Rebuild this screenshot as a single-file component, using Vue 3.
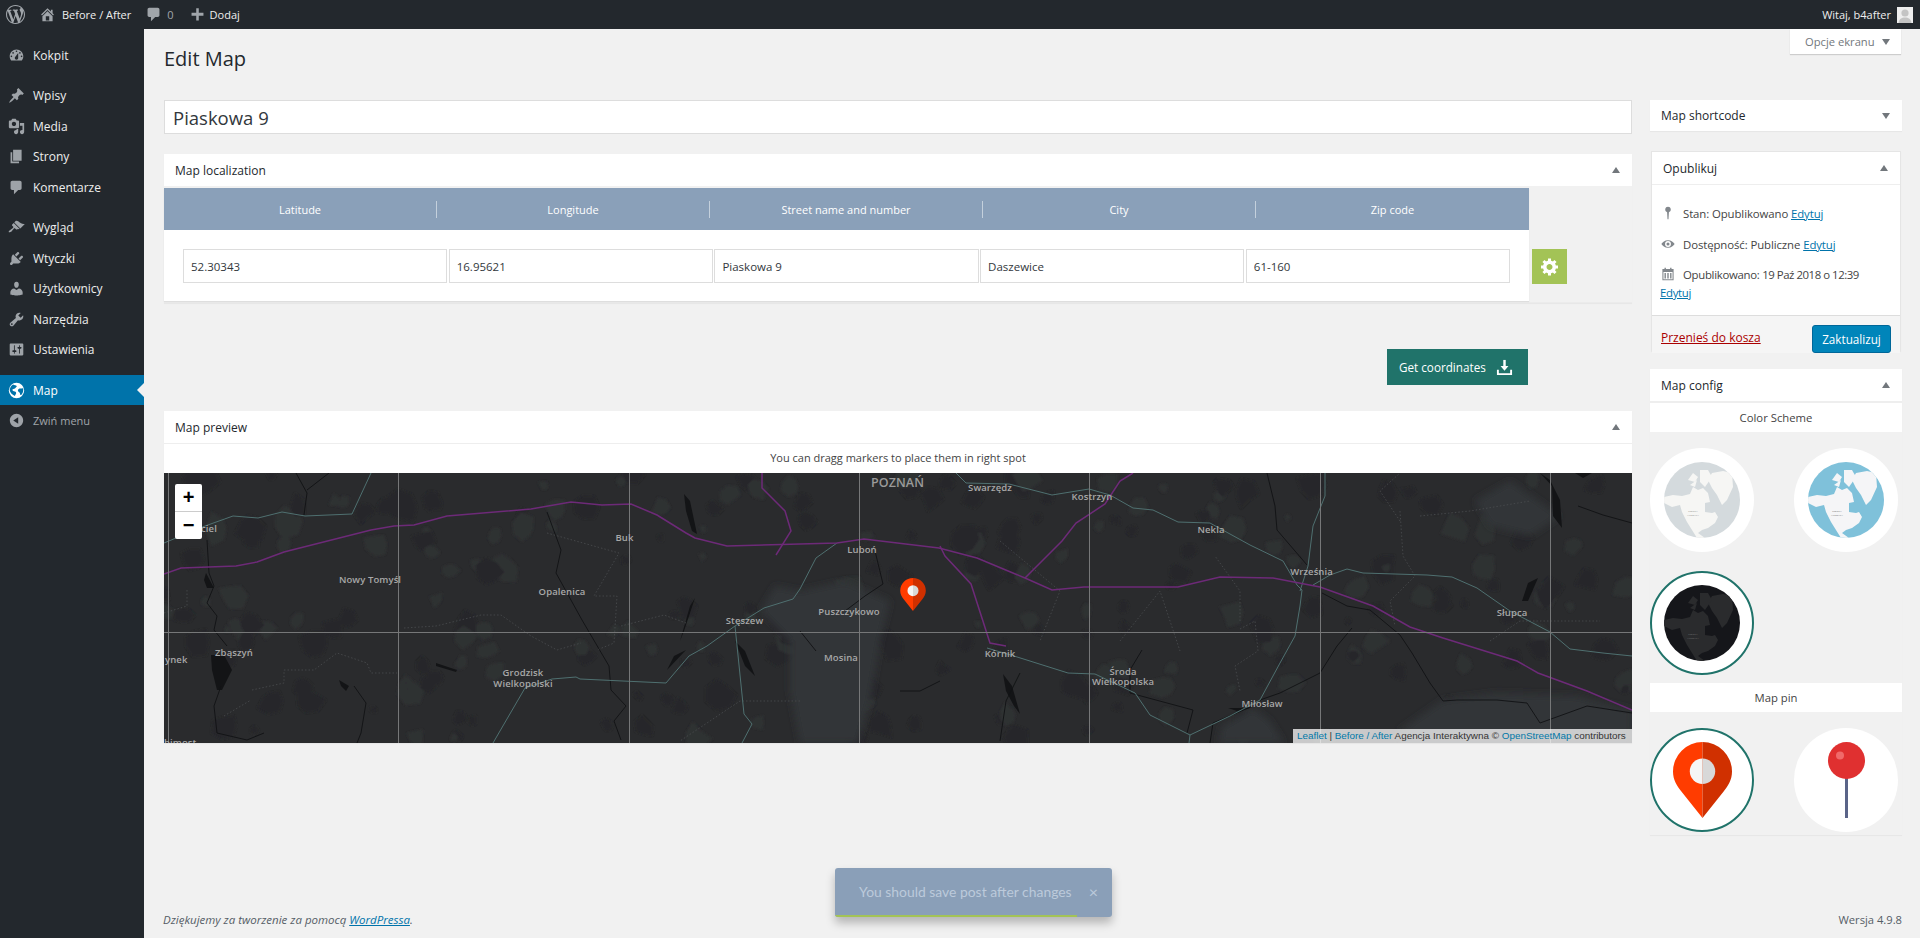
<template>
  <div class="page">
    <header class="admin-bar">
      <svg class="bar-logo" viewBox="0 0 20 20"><path :d="icons.wp" /></svg>
      <svg class="bar-icon home" viewBox="0 0 20 20"><path :d="icons.home" /></svg>
      <span class="bar-link">Before / After</span>
      <svg class="bar-icon bubble" viewBox="0 0 20 20"><path :d="icons.comments" /></svg>
      <span class="bar-count">0</span>
      <svg class="bar-icon plus" viewBox="0 0 20 20"><path :d="icons.plus" /></svg>
      <span class="bar-link">Dodaj</span>
      <span class="bar-user">Witaj, b4after</span>
      <span class="avatar">
        <svg viewBox="0 0 16 16"><circle cx="8" cy="6" r="3.6" /><path d="M1.5 16c.5-4 3-5.5 6.5-5.5s6 1.500 6.500 5.500z" /></svg>
      </span>
    </header>

    <div class="layout">
      <nav class="sidebar">
        <a
          v-for="item in menu"
          :key="item.label"
          class="menu-item"
          :class="{ active: item.active, gap: item.gap, collapse: item.collapse }"
        >
          <svg v-if="item.icon" class="menu-icon" viewBox="0 0 20 20"><path :d="item.icon" /></svg>
          <svg v-else class="menu-icon" viewBox="0 0 20 20">
            <circle cx="10" cy="10" r="9" fill="#fff" />
            <path fill="#0073aa" d="M6 2.800c1.500 1 3.500.6 4.200 1.800.6 1-1 1.400-1.500 2.400-.5 1.100-2.300.6-3.200 1.500-.8.8.2 2.200 1.500 2.300 1.500.1 2.600.8 2.600 2.200 0 1.300-1.200 2-1.500 3.600C4.700 14.800 2.300 12.400 2 9.800 2 7 3.600 4.200 6 2.800zM13 7.800c1.200-.5 2.500.2 3.600-.4.600-.3 1.200.4 1.300 1.400.2 2-.5 4.500-2.100 6.100-1 .9-1.700-.3-1.700-1.500 0-1.400-1.800-1.500-2.300-2.800-.4-1.100.1-2.400 1.200-2.800z" />
          </svg>
          <span>{{ item.label }}</span>
        </a>
      </nav>

      <div class="content">
        <div class="screen-options">Opcje ekranu <i class="tri-down small"></i></div>

        <div class="columns">
          <main class="main-col">
            <h1>Edit Map</h1>
            <input class="title-input" value="Piaskowa 9" />

            <section class="box loc-box">
              <div class="box-head">Map localization <i class="tri-up"></i></div>
              <div class="loc-wrap">
                <div class="loc-table">
                  <div class="loc-head">
                    <div v-for="col in columns" :key="col" class="loc-col">{{ col }}</div>
                  </div>
                  <div class="loc-row">
                    <input v-for="val in values" :key="val" class="loc-input" :value="val" />
                  </div>
                </div>
                <button class="gear-btn">
                  <svg viewBox="0 0 20 20"><path :d="icons.gear" /></svg>
                </button>
              </div>
            </section>

            <div class="coords-row">
              <button class="coords-btn">
                Get coordinates
                <svg viewBox="0 0 18 18" fill="none" stroke="#fff" stroke-width="2">
                  <path d="M9 1v8.500" stroke-width="2.600" />
                  <path d="M4.800 7.500h8.400L9 12.500z" fill="#fff" stroke="none" />
                  <path d="M2 11.500v4.500h14v-4.500" />
                </svg>
              </button>
            </div>

            <section class="box preview-box">
              <div class="box-head bordered">Map preview <i class="tri-up"></i></div>
              <div class="preview-note">You can dragg markers to place them in right spot</div>
              <div class="map">
                <svg class="map-svg" viewBox="164 472 1468 270">
                  <defs>
                    <filter id="soft" x="0" y="0" width="100%" height="100%">
                      <feGaussianBlur stdDeviation="1.300" />
                    </filter>
                    <filter id="softer" x="-10%" y="-10%" width="120%" height="120%">
                      <feGaussianBlur stdDeviation="3.500" />
                    </filter>
                  </defs>
                  <rect x="164" y="472" width="1468" height="270" fill="#2a2b2d" />
                  <g filter="url(#soft)">
                    <polygon
                      v-for="(blob, i) in blobs"
                      :key="i"
                      :points="blob.points"
                      :fill="blob.fill"
                    />
                  </g>
                  <g filter="url(#softer)" fill="#313437">
                    <polygon points="760,610 775,585 800,590 845,580 890,600 880,640 870,700 858,742 800,742 790,690 790,640" />
                    <polygon points="1400,742 1400,729 1443,699 1497,692 1577,695 1632,709 1632,742" />
                    <polygon points="1218,742 1222,725 1253,707 1270,720 1284,742" />
                    <polygon points="1475,500 1510,480 1560,515 1530,535 1490,525" />
                  </g>
                  <path v-for="lake in lakes" :key="lake" :d="lake" fill="#131416" />
                  <path
                    v-for="(line, i) in borders"
                    :key="'b' + i"
                    :d="line"
                    fill="none"
                    stroke="#4a4c4f"
                    stroke-width="0.8"
                    stroke-dasharray="1.500 2"
                  />
                  <path
                    v-for="(line, i) in rivers"
                    :key="'r' + i"
                    :d="line"
                    fill="none"
                    stroke="#111214"
                    stroke-width="0.900"
                  />
                  <path
                    v-for="(line, i) in tealRoads"
                    :key="'t' + i"
                    :d="line"
                    fill="none"
                    stroke="#4f7070"
                    stroke-width="1"
                  />
                  <path
                    v-for="(line, i) in purpleRoads"
                    :key="'p' + i"
                    :d="line"
                    fill="none"
                    stroke="#6d2a78"
                    stroke-width="1.500"
                  />
                  <path
                    v-for="x in gridX"
                    :key="x"
                    :d="`M${x} 472V742`"
                    stroke="#767778"
                    stroke-width="1"
                  />
                  <path d="M164 631.500H1632" stroke="#767778" stroke-width="1" />
                  <text
                    v-for="label in labels"
                    :key="label.text + label.y"
                    class="map-label"
                    :class="{ big: label.big }"
                    :x="label.x"
                    :y="label.y"
                    :text-anchor="label.start ? 'start' : 'middle'"
                  >{{ label.text }}</text>
                </svg>

                <svg class="marker" viewBox="0 0 59 76">
                  <path :d="pinLeft" fill="#ff3c00" />
                  <path :d="pinRight" fill="#d03000" />
                  <path d="M29.500 16.500a12.700 12.700 0 0 0 0 25.400z" fill="#f5f5f5" />
                  <path d="M29.500 16.500a12.700 12.700 0 0 1 0 25.400z" fill="#d8d8d8" />
                </svg>

                <div class="zoom-ctl">
                  <span>+</span>
                  <span>−</span>
                </div>

                <div class="attribution">
                  <a>Leaflet</a> | <a>Before / After</a> Agencja Interaktywna © <a>OpenStreetMap</a> contributors
                </div>
              </div>
            </section>
          </main>

          <aside class="side-col">
            <section class="box">
              <div class="box-head short">Map shortcode <i class="tri-down"></i></div>
            </section>

            <section class="box publish">
              <div class="box-head bordered">Opublikuj <i class="tri-up"></i></div>
              <div class="pub-body">
                <p>
                  <svg class="pub-icon" viewBox="0 0 20 20"><path d="M10 1a4 4 0 0 1 1.300 7.800L10.700 19H9.300L8.700 8.800A4 4 0 0 1 10 1z" /></svg>Stan: <b>Opublikowano</b> <a>Edytuj</a>
                </p>
                <p>
                  <svg class="pub-icon" viewBox="0 0 20 20"><path fill-rule="evenodd" d="M10 4.500c4.500 0 8 3 9.500 5.500-1.500 2.500-5 5.500-9.500 5.500S2 12.500.5 10C2 7.500 5.500 4.500 10 4.500zm0 1.300a4.200 4.200 0 1 0 0 8.400 4.200 4.200 0 0 0 0-8.400zM10 7.800a2.200 2.200 0 1 1 0 4.400 2.200 2.200 0 0 1 0-4.400z" /></svg>Dostępność: <b>Publiczne</b> <a>Edytuj</a>
                </p>
                <p class="tight">
                  <svg class="pub-icon" viewBox="0 0 20 20"><path fill-rule="evenodd" d="M5 1h2v2h6V1h2v2h3v16H2V3h3zM3.500 7v10.500h13V7zM5 8.500h2v8H5zm4 0h2v8H9zm4 0h2v8h-2z" /></svg>Opublikowano: <b>19 Paź 2018 o 12:39</b> <a>Edytuj</a>
                </p>
              </div>
              <div class="pub-foot">
                <a class="trash">Przenieś do kosza</a>
                <button class="update-btn">Zaktualizuj</button>
              </div>
            </section>

            <section class="box config">
              <div class="box-head">Map config <i class="tri-up"></i></div>
              <div class="config-title">Color Scheme</div>
              <div class="choice-grid schemes">
                <div
                  v-for="scheme in schemes"
                  :key="scheme.name"
                  class="choice"
                  :class="{ selected: scheme.selected }"
                >
                  <svg class="globe" viewBox="0 0 76 76">
                    <clipPath :id="'clip-' + scheme.name"><circle cx="38" cy="38" r="38" /></clipPath>
                    <circle cx="38" cy="38" r="38" :fill="scheme.sea" />
                    <g :fill="scheme.land" :clip-path="`url(#clip-${scheme.name})`">
                      <polygon points="44,18 48,11 59,9 68,11 69,25 63,38 58,43 53,33 48,26" />
                      <polygon points="0,35 9,33 18,34 26,32 29,25 34,28 39,26 44,31 46,40 41,41 41,50 48,51 51,50 54,55 51,61 44,66 38,68 34,71 41,76 33,76 28,68 23,60 18,50 16,43 8,45 0,41" />
                      <polygon points="26,23 33,18 31,25" />
                      <polygon points="24,18 29,11 34,15 31,20" />
                      <polygon points="36,8 44,8 48,15 41,25 36,20" />
                    </g>
                    <text class="globe-text" :fill="scheme.text" x="29" y="49.500" text-anchor="middle">NORTH</text>
                    <text class="globe-text" :fill="scheme.text" x="29" y="53.500" text-anchor="middle">AMERICA</text>
                  </svg>
                </div>
              </div>
              <div class="config-title">Map pin</div>
              <div class="choice-grid pins">
                <div class="choice selected">
                  <svg class="big-pin" viewBox="0 0 59 76">
                    <path :d="pinLeft" fill="#ff3c00" />
                    <path :d="pinRight" fill="#d03000" />
                    <path d="M29.500 16.500a12.700 12.700 0 0 0 0 25.400z" fill="#f5f5f5" />
                    <path d="M29.500 16.500a12.700 12.700 0 0 1 0 25.400z" fill="#d8d8d8" />
                  </svg>
                </div>
                <div class="choice">
                  <svg class="big-pin" viewBox="0 0 59 76">
                    <rect x="28" y="35" width="3" height="41" fill="#5a6488" />
                    <circle cx="29.500" cy="18.500" r="18.500" fill="#e03030" />
                    <circle cx="23" cy="13.500" r="4" fill="#f06a6a" />
                  </svg>
                </div>
              </div>
            </section>
          </aside>
        </div>

        <footer class="foot">
          <span class="thanks">Dziękujemy za tworzenie za pomocą <a>WordPressa</a>.</span>
          <span class="version">Wersja 4.9.8</span>
        </footer>
      </div>
    </div>

    <div class="toast">
      <span class="toast-text">You should save post after changes</span>
      <span class="toast-close">×</span>
      <div class="toast-bar"></div>
    </div>
  </div>
</template>

<script setup>
const icons = {
  wp: 'M20 10c0-5.510-4.490-10-10-10C4.480 0 0 4.490 0 10c0 5.520 4.480 10 10 10 5.510 0 10-4.480 10-10zM7.780 15.370L4.370 6.220c.55-.02 1.170-.08 1.170-.08.5-.06.44-1.130-.06-1.110 0 0-1.450.11-2.370.11-.18 0-.37 0-.58-.01C4.120 2.690 6.870 1.110 10 1.110c2.330 0 4.450.87 6.050 2.340-.68-.11-1.650.39-1.650 1.580 0 .74.45 1.360.9 2.100.35.61.55 1.360.55 2.460 0 1.490-1.400 5-1.400 5l-3.030-8.370c.54-.02.82-.17.82-.17.5-.05.44-1.250-.06-1.220 0 0-1.440.12-2.380.12-.87 0-2.330-.12-2.330-.12-.5-.03-.56 1.200-.06 1.220l.92.08 1.260 3.410zM17.410 10c.24-.64.74-1.870.43-4.250.7 1.290 1.050 2.710 1.050 4.250 0 3.290-1.730 6.240-4.400 7.780.97-2.590 1.940-5.200 2.920-7.780zM6.100 18.090C3.120 16.650 1.110 13.530 1.110 10c0-1.300.23-2.480.72-3.590C3.250 10.300 4.670 14.200 6.100 18.090zm4.030-6.630l2.580 6.980c-.86.29-1.760.45-2.710.45-.79 0-1.570-.11-2.290-.33.81-2.380 1.620-4.740 2.420-7.100z',
  home: 'M16 8.500l1.530 1.530-1.060 1.060L10 4.620l-6.470 6.470-1.060-1.060L10 2.500l4 4v-2h2v4zm-6-2.460l6 5.990V18H4v-5.970zM12 17v-5H8v5h4z',
  comments: 'M5 2h10c1.100 0 2 .9 2 2v7c0 1.100-.9 2-2 2h-3l-5 5v-5H5c-1.100 0-2-.9-2-2V4c0-1.100.9-2 2-2z',
  plus: 'M17 8v3.500h-5.500V17h-3v-5.500H3V8h5.500V2.500h3V8z',
  gear: 'M18 11.500h-2.180c-.17.7-.44 1.350-.81 1.930l1.540 1.540-2.100 2.100-1.540-1.540c-.58.36-1.230.63-1.910.79v2.180H8v-2.180c-.68-.16-1.330-.43-1.910-.79l-1.540 1.540-2.120-2.120 1.540-1.540c-.36-.58-.63-1.230-.79-1.910H1V8.530h2.170c.16-.7.44-1.350.8-1.940L2.430 5.050l2.100-2.100 1.540 1.540c.58-.37 1.240-.64 1.930-.81V1.500h3v2.180c.68.16 1.330.43 1.910.79l1.540-1.540 2.120 2.120-1.540 1.540c.36.59.64 1.240.8 1.940H18v2.970zm-8.500 1.500c1.660 0 3-1.340 3-3s-1.340-3-3-3-3 1.340-3 3 1.340 3 3 3z',
}

const menu = [
  { label: 'Kokpit', icon: 'M3.760 16h12.480c1.100-1.370 1.760-3.110 1.760-5 0-4.420-3.580-8-8-8s-8 3.580-8 8c0 1.890.66 3.630 1.760 5zM10 4c.55 0 1 .45 1 1s-.45 1-1 1-1-.45-1-1 .45-1 1-1zM6 6c.55 0 1 .45 1 1s-.45 1-1 1-1-.45-1-1 .45-1 1-1zm8 0c.55 0 1 .45 1 1s-.45 1-1 1-1-.45-1-1 .45-1 1-1zm-5.370 5.550L12 7v6c0 1.100-.9 2-2 2s-2-.9-2-2c0-.57.24-1.080.63-1.450zM4 10c.55 0 1 .45 1 1s-.45 1-1 1-1-.45-1-1 .45-1 1-1zm12 0c.55 0 1 .45 1 1s-.45 1-1 1-1-.45-1-1 .45-1 1-1z' },
  { label: 'Wpisy', gap: true, icon: 'M10.440 3.020l1.820-1.820 6.360 6.350-1.830 1.820c-1.050-.68-2.480-.57-3.410.36l-.75.75c-.92.93-1.040 2.350-.35 3.410l-1.830 1.820-2.410-2.410-2.800 2.790c-.42.42-3.380 2.710-3.800 2.290s1.860-3.390 2.280-3.810l2.790-2.790L4.100 9.360l1.830-1.820c1.050.69 2.480.57 3.400-.36l.75-.75c.93-.92 1.050-2.350.36-3.410z' },
  { label: 'Media', icon: 'M13 11V4c0-.55-.45-1-1-1h-1.670L9 1H5L3.670 3H2c-.55 0-1 .45-1 1v7c0 .55.45 1 1 1h10c.55 0 1-.45 1-1zM7 4.500c1.380 0 2.500 1.120 2.500 2.500S8.380 9.500 7 9.500 4.500 8.380 4.500 7 5.620 4.500 7 4.500zM14 6h5v10.500c0 1.380-1.120 2.500-2.500 2.500S14 17.880 14 16.500s1.120-2.500 2.500-2.500c.17 0 .34.02.5.05V9h-3V6zm-4 8.050V13h2v3.500c0 1.380-1.120 2.500-2.500 2.500S7 17.880 7 16.500 8.120 14 9.500 14c.17 0 .34.02.5.05z' },
  { label: 'Strony', icon: 'M6 15V2h10v13H6zm-1 1h8v2H3V5h2v11z' },
  { label: 'Komentarze', icon: 'M5 2h9c1.100 0 2 .9 2 2v7c0 1.100-.9 2-2 2h-2l-5 5v-5H5c-1.100 0-2-.9-2-2V4c0-1.100.9-2 2-2z' },
  { label: 'Wygląd', gap: true, icon: 'M14.480 11.060L7.410 3.990l1.500-1.500c.5-.56 2.300-.47 3.510.32 1.210.8 1.430 1.280 2.910 2.100 1.180.64 2.450 1.260 4.450.85zm-.71.71L6.700 4.700 4.930 6.470c-.39.39-.39 1.020 0 1.410l1.060 1.060c.39.39.39 1.030 0 1.420-.6.6-1.430 1.110-2.210 1.690-.35.26-.7.53-1.010.84C1.430 13.230.4 14.850 1.020 15.500c.54.56 2.290-.21 3.380-1.220.31-.31.58-.66.84-1.010.58-.78 1.090-1.610 1.690-2.210.39-.39 1.020-.39 1.410 0l1.060 1.060c.39.39 1.020.39 1.410 0z' },
  { label: 'Wtyczki', icon: 'M13.110 4.360L9.870 7.600 8 5.730l3.240-3.240c.35-.34 1.050-.2 1.560.32.52.51.66 1.210.31 1.550zm-8 1.770l.91-1.120 9.010 9.010-1.190.84c-.71.71-2.630 1.160-3.820 1.160H6.140L4.900 17.260c-.59.59-1.540.59-2.120 0-.59-.58-.59-1.530 0-2.120l1.240-1.240v-3.880c0-1.130.4-3.190 1.090-3.890zm7.260 3.970l3.240-3.240c.34-.35 1.040-.21 1.550.31.52.51.66 1.210.31 1.550l-3.240 3.250z' },
  { label: 'Użytkownicy', icon: 'M10 9.250c-2.270 0-2.730-3.440-2.730-3.440C7 4.020 7.820 2 9.970 2c2.160 0 2.980 2.020 2.710 3.810 0 0-.41 3.440-2.680 3.440zm0 2.570L12.720 10c2.390 0 4.520 2.330 4.520 4.530v2.490s-3.650 1.130-7.240 1.130c-3.650 0-7.240-1.130-7.240-1.130v-2.490c0-2.250 1.940-4.480 4.470-4.480z' },
  { label: 'Narzędzia', icon: 'M16.680 9.770c-1.340 1.340-3.300 1.670-4.950.99l-5.410 6.520c-.99.99-2.590.99-3.580 0s-.99-2.590 0-3.570l6.520-5.420c-.68-1.650-.35-3.610.99-4.950 1.280-1.280 3.120-1.620 4.720-1.060l-2.890 2.890 2.820 2.820 2.860-2.870c.53 1.580.18 3.390-1.080 4.650zM3.810 16.210c.4.39 1.040.39 1.430 0 .4-.4.4-1.040 0-1.430-.39-.4-1.030-.4-1.430 0-.39.39-.39 1.030 0 1.430z' },
  { label: 'Ustawienia', icon: 'M18 16V4c0-.55-.45-1-1-1H3c-.55 0-1 .45-1 1v12c0 .55.45 1 1 1h14c.55 0 1-.45 1-1zM8 11h1c.55 0 1 .45 1 1s-.45 1-1 1H8v1.500c0 .28-.22.5-.5.5s-.5-.22-.5-.5V13H6c-.55 0-1-.45-1-1s.45-1 1-1h1V5.500c0-.28.22-.5.5-.5s.5.22.5.5V11zm5-2h-1c-.55 0-1-.45-1-1s.45-1 1-1h1V5.500c0-.28.22-.5.5-.5s.5.22.5.5V7h1c.55 0 1 .45 1 1s-.45 1-1 1h-1v5.500c0 .28-.22.5-.5.5s-.5-.22-.5-.5V9z' },
  { label: 'Map', gap: true, active: true },
  { label: 'Zwiń menu', collapse: true, icon: 'M10 2.160c4.330 0 7.840 3.510 7.840 7.840s-3.510 7.840-7.840 7.840S2.160 14.330 2.160 10 5.710 2.160 10 2.160zm2 11.720V6.120L6.180 9.970z' },
]

const columns = ['Latitude', 'Longitude', 'Street name and number', 'City', 'Zip code']
const values = ['52.30343', '16.95621', 'Piaskowa 9', 'Daszewice', '61-160']

const schemes = [
  { name: 'grey', sea: '#d4dadd', land: '#f6f6f4', text: '#888' },
  { name: 'blue', sea: '#7fc1da', land: '#f5f5f7', text: '#666' },
  { name: 'dark', sea: '#15161a', land: '#2a2b2d', text: '#777', selected: true },
]

const pinLeft = 'M29.500 0A29.500 29.500 0 0 0 0 29.500C0 38 4 44 8 49L29.500 76Z'
const pinRight = 'M29.500 0A29.500 29.500 0 0 1 59 29.500C59 38 55 44 51 49L29.500 76Z'

const gridX = [168.500, 398.500, 629.500, 859.500, 1089.500, 1320.500, 1550.500]

const purpleRoads = [
  'M164 573L181 567L236 565L257 561L284 551L371 529L394 525L414 524L447 515L531 508L571 501L602 504L631 503L657 514L686 532L695 537L727 545L800 543L837 542L864 538L939 547L977 557L1025 577L1052 589L1084 586L1178 586L1220 576L1273 577L1320 586L1373 605L1410 626L1443 637L1517 660L1538 672L1587 690L1632 709',
  'M1133 472L1120 480L1105 503L1076 522L1062 540L1025 577',
  'M940 545L945 555L971 583L990 642L1006 645',
  'M762 472L762 487L785 510L791 530L776 554',
]

const tealRoads = [
  'M371 472L352 513L305 515L282 511L258 517L233 515L205 525L164 542',
  'M493 742L525 687L552 678L576 676L580 678L666 682L689 655L707 645L735 625L764 607L793 598L800 588L816 557L837 542',
  'M735 625L744 713L752 723L742 742',
  'M956 472L966 482L1009 483L1052 494L1089 488L1110 494L1133 507L1153 509L1178 521L1210 522L1250 544L1283 560L1297 584L1302 589L1300 605L1295 635L1280 662L1260 699L1230 715L1190 734L1150 714L1135 692L1095 673L1068 672L1014 655L987 647',
  'M1325 472L1325 495L1313 525L1308 565L1300 590',
  'M1313 584L1330 574L1347 568L1363 572L1427 574L1452 576L1477 587L1510 610L1550 631L1570 648L1603 652L1632 655',
  'M1190 734L1189 742',
]

const rivers = [
  'M207 539L209 572L214 585L207 602L217 615L214 629L227 645',
  'M221 685L214 705L217 732L247 739L264 732',
  'M547 511L561 549L556 572L582 619L609 665L611 689L626 705L614 720L621 739',
  'M296 472L307 492L304 514',
  'M329 472L307 489',
  'M354 685L366 702L361 732L357 742',
  'M1267 472L1275 505L1277 529L1307 564',
  'M1322 592L1347 605L1370 609L1400 634L1412 652L1430 682L1443 700L1457 699L1497 699L1527 702L1540 722L1587 705L1632 712',
  'M1352 627L1337 645L1320 672L1280 692L1260 699',
  'M1253 705L1213 722L1210 742',
  'M1578 505L1603 514L1632 522',
  'M1142 649L1130 669L1130 692L1193 709L1187 732',
  'M875 550L883 583L865 595L845 610',
  'M800 630L816 650',
  'M940 680L920 690L900 690',
  'M1000 740L1006 700L1020 672',
]

const borders = [
  'M404 627L436 625L481 614L501 614L531 635L557 649L581 642',
  'M547 532L619 552L594 595L617 595L614 642L597 649',
  'M621 625L664 614L686 622',
  'M284 669L314 669L337 652L367 662L371 672L397 672',
  'M252 689L284 682L284 669',
  'M224 715L251 699',
  'M164 612L187 605L187 587',
  'M800 700L740 700L680 740',
  'M1000 540L1060 590L1040 640',
  'M1120 640L1160 590L1180 650',
  'M1400 520L1380 490L1400 472',
  'M1400 510L1403 555L1415 575L1390 600L1395 625',
  'M1420 515L1470 510L1530 500',
  'M1240 620L1240 590L1215 555',
  'M1240 628L1255 620L1258 650L1235 665L1240 690',
  'M1490 640L1520 620L1600 620',
]

const lakes = [
  'M211 654L224 654L232 669L222 689L217 689L212 669Z',
  'M206 572L214 587L207 587L204 579Z',
  'M339 679L349 685L346 690L341 685Z',
  'M436 662L457 669L456 671L436 665Z',
  'M686 649L667 669L674 655Z',
  'M684 493L690 500L697 533L692 530L686 510Z',
  'M695 597L690 605L680 640L684 630Z',
  'M1540 472L1550 479L1560 499L1562 527L1553 515L1552 485Z',
  'M1575 472L1592 472L1583 477Z',
  'M1538 577L1528 600L1522 600L1528 582Z',
  'M1228 707L1250 707L1237 710Z',
  'M1003 673L1012 685L1020 713L1014 705L1006 690Z',
  'M735 640L745 650L755 675L745 665Z',
]

// scatter of forest patches, seeded so the picture stays the same
let seed = 11
function rnd() {
  seed = (seed * 16807) % 2147483647
  return seed / 2147483647
}
const blobs = []
for (let i = 0; i < 260; i++) {
  const cx = 164 + rnd() * 1468
  const cy = 472 + rnd() * 270
  const r = 4 + rnd() * 13
  const pts = []
  for (let a = 0; a < 7; a++) {
    const ang = (a / 7) * Math.PI * 2
    const d = r * (0.55 + rnd() * 0.6)
    pts.push(`${(cx + Math.cos(ang) * d).toFixed(1)},${(cy + Math.sin(ang) * d).toFixed(1)}`)
  }
  blobs.push({ points: pts.join(' '), fill: rnd() > 0.55 ? '#2f3032' : '#27282a' })
}

const labels = [
  { text: 'ciel', x: 209, y: 531 },
  { text: 'Nowy Tomyśl', x: 370, y: 582 },
  { text: 'Opalenica', x: 562, y: 594 },
  { text: 'Buk', x: 624.500, y: 540 },
  { text: 'Stęszew', x: 744.500, y: 623 },
  { text: 'Zbąszyń', x: 234, y: 655 },
  { text: 'ynek', x: 165, y: 662, start: true },
  { text: 'bimost', x: 164, y: 745, start: true },
  { text: 'Grodzisk', x: 523, y: 675 },
  { text: 'Wielkopolski', x: 523, y: 686 },
  { text: 'POZNAŃ', x: 897.500, y: 486, big: true },
  { text: 'Swarzędz', x: 990, y: 490 },
  { text: 'Kostrzyn', x: 1092, y: 499 },
  { text: 'Nekla', x: 1211, y: 532 },
  { text: 'Luboń', x: 862, y: 552 },
  { text: 'Puszczykowo', x: 849, y: 614 },
  { text: 'Września', x: 1311.500, y: 574 },
  { text: 'Słupca', x: 1512, y: 615 },
  { text: 'Mosina', x: 841, y: 660 },
  { text: 'Kórnik', x: 1000, y: 656 },
  { text: 'Środa', x: 1123, y: 674 },
  { text: 'Wielkopolska', x: 1123, y: 684 },
  { text: 'Miłosław', x: 1262, y: 706 },
]
</script>

<style scoped>
.page {
  position: relative;
  height: 938px;
  overflow: hidden;
  background: #f1f1f1;
  color: #444;
  font-family: "Open Sans", "Noto Sans", sans-serif;
  font-size: 12px;
}

.admin-bar {
  display: flex;
  align-items: center;
  height: 29px;
  padding: 0 7px 0 6px;
  background: #23282d;
  color: #eee;
  font-size: 11px;
}
.bar-logo { width: 19px; height: 19px; fill: #a0a5aa; margin-right: 14px; }
.bar-icon { width: 17px; height: 17px; fill: #a0a5aa; }
.home { margin-right: 6px; }
.bubble { margin: 0 5px 0 14px; }
.bar-count { color: #a0a5aa; margin-right: 15px; }
.plus { margin-right: 4px; }
.bar-user { margin-left: auto; margin-right: 6px; }
.avatar { width: 16px; height: 16px; background: #eee; overflow: hidden; }
.avatar svg { display: block; fill: #c4c4c4; }

.layout {
  display: flex;
  height: 909px;
}

.sidebar {
  flex: 0 0 144px;
  padding-top: 11px;
  background: #23282d;
  color: #eee;
}
.menu-item {
  position: relative;
  display: flex;
  align-items: center;
  gap: 8px;
  height: 30.600px;
  padding-left: 8px;
  font-size: 12px;
}
.menu-item.gap { margin-top: 9.600px; }
.menu-icon { width: 17px; height: 17px; flex: none; fill: #9ea3a8; }
.menu-item.active {
  background: #0073aa;
  color: #fff;
  font-weight: 500;
}
.menu-item.active::after {
  content: "";
  position: absolute;
  right: 0;
  top: 8px;
  border: 7px solid transparent;
  border-right-color: #f1f1f1;
  border-left-width: 0;
}
.menu-item.collapse { color: #a0a5aa; font-size: 11px; }

.content {
  position: relative;
  flex: 1;
  display: flex;
  flex-direction: column;
  padding: 0 18px 0 20px;
  min-width: 0;
}

.screen-options {
  position: absolute;
  top: 0;
  right: 19px;
  display: flex;
  align-items: center;
  gap: 5px;
  box-sizing: border-box;
  width: 111px;
  height: 25px;
  padding-left: 15px;
  background: #fff;
  color: #72777c;
  font-size: 11.200px;
  box-shadow: 0 1px 1px rgba(0, 0, 0, 0.15);
}

.columns {
  display: flex;
  gap: 18px;
}
.main-col { flex: 0 0 1468px; min-width: 0; }
.side-col { flex: 0 0 252px; padding-top: 71px; }

h1 {
  height: 71px;
  margin: 0;
  padding-top: 15px;
  box-sizing: border-box;
  color: #23282d;
  font-size: 20px;
  font-weight: 400;
  line-height: 30px;
}

.title-input {
  display: block;
  box-sizing: border-box;
  width: 100%;
  height: 34px;
  padding: 0 8px;
  border: 1px solid #ddd;
  background: #fff;
  color: #32373c;
  font: 18.500px "Open Sans", "Noto Sans", sans-serif;
  outline: none;
}

.box {
  background: #fff;
  box-shadow: 0 1px 1px rgba(0, 0, 0, 0.04);
}

.box-head {
  position: relative;
  height: 32px;
  padding-left: 11px;
  color: #23282d;
  font-size: 12px;
  font-weight: 500;
  line-height: 33px;
}
.box-head.short { height: 31px; line-height: 32px; }
.box-head.bordered { border-bottom: 1px solid #eee; }

i.tri-up,
i.tri-down {
  position: absolute;
  right: 12px;
  top: 13px;
  width: 0;
  height: 0;
  border-left: 4.500px solid transparent;
  border-right: 4.500px solid transparent;
}
i.tri-up { border-bottom: 6px solid #72777c; }
i.tri-down { border-top: 6px solid #72777c; }
i.tri-down.small {
  position: static;
  margin-left: 2px;
}

.loc-box { margin-top: 20px; }
.loc-wrap {
  display: flex;
  align-items: flex-start;
  height: 114px;
  padding-top: 2px;
  border-bottom: 1px solid #ebebeb;
  background: #f1f1f1;
  box-sizing: content-box;
}
.loc-table {
  flex: 0 0 1365px;
  background: #fff;
  box-shadow: 0 1px 1px rgba(0, 0, 0, 0.08);
}
.loc-head {
  display: grid;
  grid-template-columns: repeat(5, 1fr);
  align-items: center;
  height: 42px;
  background: #8aa0b9;
  color: #fff;
  font-size: 11px;
}
.loc-col {
  height: 17px;
  border-right: 1px solid #c4d0dc;
  line-height: 17px;
  text-align: center;
}
.loc-col:last-child { border-right: 0; }
.loc-row {
  display: flex;
  gap: 1.500px;
  height: 71px;
  padding: 19px 19px 0;
  box-sizing: border-box;
}
.loc-input {
  flex: 1;
  box-sizing: border-box;
  min-width: 0;
  height: 34px;
  padding: 0 7px;
  border: 1px solid #ddd;
  background: #fff;
  color: #32373c;
  font: 11.500px "Open Sans", "Noto Sans", sans-serif;
  outline: none;
}

.gear-btn {
  display: flex;
  align-items: center;
  justify-content: center;
  width: 35px;
  height: 35px;
  margin: 61px 0 0 3px;
  padding: 0;
  border: 0;
  background: #a3c356;
}
.gear-btn svg { width: 20px; height: 20px; fill: #fff; }

.coords-row {
  display: flex;
  justify-content: flex-end;
  margin-top: 46px;
  padding-right: 104px;
}
.coords-btn {
  display: flex;
  align-items: center;
  gap: 10px;
  width: 141px;
  height: 36px;
  padding: 0 12px;
  border: 0;
  background: #20736a;
  color: #fff;
  font: 11.700px "Open Sans", "Noto Sans", sans-serif;
  white-space: nowrap;
}
.coords-btn svg { width: 17px; height: 17px; flex: none; }

.preview-box { margin-top: 26px; }
.preview-note {
  height: 29px;
  color: #444;
  font-size: 11px;
  line-height: 28px;
  text-align: center;
}

.map {
  position: relative;
  height: 270px;
  overflow: hidden;
}
.map-svg {
  display: block;
  width: 100%;
  height: 100%;
}
.map-label {
  fill: #a8a8a8;
  font: 600 9.500px "Open Sans", "Noto Sans", sans-serif;
  letter-spacing: 0.1px;
}
.map-label.big {
  fill: #9a9a9a;
  font-size: 12.500px;
}
.marker {
  position: absolute;
  left: 736px;
  top: 105px;
  width: 26px;
  height: 33px;
}
.zoom-ctl {
  position: absolute;
  left: 11px;
  top: 11px;
  width: 27px;
  background: #fff;
  border-radius: 2px;
}
.zoom-ctl span {
  display: block;
  height: 27px;
  color: #000;
  font: 700 20px/27px "Liberation Sans", sans-serif;
  text-align: center;
}
.zoom-ctl span:first-child { border-bottom: 1px solid #ccc; }
.attribution {
  position: absolute;
  right: 0;
  bottom: 0;
  width: 339px;
  height: 14px;
  box-sizing: border-box;
  padding-left: 4px;
  background: rgba(255, 255, 255, 0.75);
  color: #333;
  font: 9.900px/14px "Liberation Sans", sans-serif;
  white-space: nowrap;
  overflow: hidden;
}
.attribution a { color: #0078a8; }

.publish {
  margin: 20px 1px 0;
  height: 200px;
  border: 1px solid #e5e5e5;
  box-sizing: border-box;
  display: flex;
  flex-direction: column;
}
.pub-body {
  flex: 1;
  padding: 20px 8px 0 8px;
}
.pub-body p {
  margin: 0 0 12.500px;
  line-height: 18px;
  color: #444;
  font-size: 11.400px;
  letter-spacing: -0.1px;
}
.pub-body b { font-weight: 500; }
.pub-body .tight b { letter-spacing: -0.45px; }
.pub-body .tight { letter-spacing: -0.3px; }
.pub-body a { color: #0073aa; text-decoration: underline; }
.pub-icon {
  width: 16px;
  height: 14px;
  margin-right: 7px;
  vertical-align: -2px;
  fill: #82878c;
}
.pub-foot {
  display: flex;
  align-items: flex-start;
  justify-content: space-between;
  height: 46px;
  box-sizing: border-box;
  padding: 9px 9px 0;
  border-top: 1px solid #ddd;
  background: #f5f5f5;
}
.trash { color: #a00; text-decoration: underline; font-size: 12px; line-height: 26px; }
.update-btn {
  width: 79px;
  height: 28px;
  padding: 0;
  border: 1px solid #006799;
  border-radius: 3px;
  background: #0085ba;
  color: #fff;
  font: 11.700px "Open Sans", "Noto Sans", sans-serif;
}

.config {
  margin-top: 18px;
  background: #fff;
}
.config .box-head { border-bottom: 2px solid #eee; }
.config-title {
  height: 29px;
  background: #fff;
  color: #444;
  font-size: 11.300px;
  line-height: 30px;
  text-align: center;
}
.choice-grid {
  display: grid;
  grid-template-columns: 144px 104px;
  row-gap: 19px;
  background: #f1f1f1;
}
.schemes { padding: 16px 4px 8px 0; }
.pins { padding: 16px 4px 3px 0; }
.choice {
  display: flex;
  align-items: center;
  justify-content: center;
  box-sizing: border-box;
  width: 104px;
  height: 104px;
  border-radius: 50%;
  background: #fff;
}
.choice.selected { border: 2px solid #20736a; }
.globe { width: 76px; height: 76px; }
.globe-text {
  font: 2.500px "Open Sans", "Noto Sans", sans-serif;
  letter-spacing: 0.2px;
}
.big-pin { width: 59px; height: 76px; }

.foot {
  display: flex;
  justify-content: space-between;
  margin-top: auto;
  height: 18px;
  margin-bottom: 9px;
  font-size: 11.500px;
  line-height: 18px;
  color: #555d66;
}
.thanks { font-style: italic; margin-left: -1px; }
.thanks a { color: #0073aa; text-decoration: underline; }
.version { font-size: 11.200px; }

.toast {
  position: absolute;
  left: 835px;
  top: 868px;
  width: 277px;
  height: 49px;
  border-radius: 3px;
  background: #8a9fb8;
  box-shadow: 0 6px 10px rgba(0, 0, 0, 0.25);
  overflow: hidden;
  font-family: Lato, "Open Sans", sans-serif;
}
.toast-text {
  position: absolute;
  left: 24px;
  top: 14px;
  color: #bccadb;
  font-size: 13.900px;
  line-height: 20px;
  white-space: nowrap;
}
.toast-close {
  position: absolute;
  right: 14px;
  top: 14px;
  color: #bccadb;
  font-size: 16px;
  line-height: 20px;
}
.toast-bar {
  position: absolute;
  left: 0;
  bottom: 0;
  width: 242px;
  height: 2px;
  background: #a3c356;
}
</style>

<style>
html,
body {
  margin: 0;
  background: #f1f1f1;
}
</style>
